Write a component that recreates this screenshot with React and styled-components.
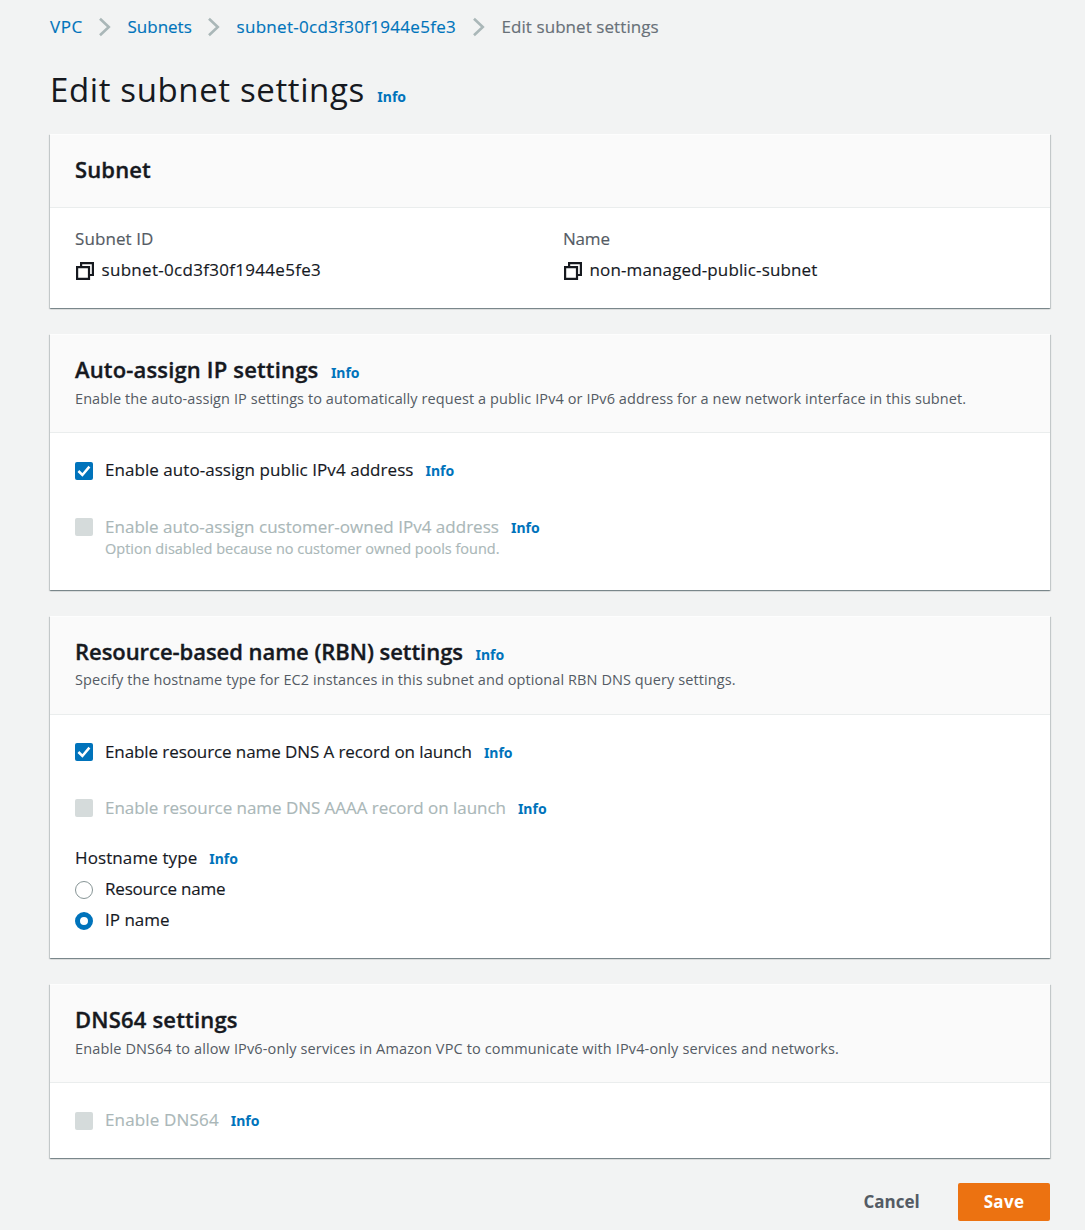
import React, { useState } from 'react';
import styled, { createGlobalStyle } from 'styled-components';

const GlobalStyle = createGlobalStyle`
  *, *::before, *::after { box-sizing: border-box; }
  body {
    margin: 0;
    background: #f2f3f3;
    color: #16191f;
    font-family: "Open Sans", "Noto Sans", sans-serif;
    font-size: 17px;
    line-height: 24px;
  }
`;

const Page = styled.main`
  width: 1085px;
  min-height: 1230px;
  padding: 15px 35px 0 50px;
`;

const Text = styled.span`
  letter-spacing: ${(p) => p.$track || 0}px;
  white-space: nowrap;
  -webkit-text-stroke: 0.15px currentColor;
`;

const Breadcrumbs = styled.nav`
  display: flex;
  align-items: center;
  height: 24px;
`;

const Crumb = styled(Text).attrs({ as: 'a' })`
  color: #0073bb;
  width: ${(p) => p.$width}px;
`;

const CurrentCrumb = styled(Text)`
  color: #687078;
`;

const Chevron = styled.svg`
  flex: none;
  width: 14px;
  height: 20px;
  margin: 0 15.5px 0 15px;
  fill: none;
  stroke: #aab7b8;
  stroke-width: 2.6;
`;

const TitleRow = styled.div`
  display: flex;
  align-items: baseline;
  gap: 12.5px;
  height: 44px;
  margin: 29px 0 22px;
`;

const PageTitle = styled.h1`
  margin: 0;
  font-size: 33px;
  line-height: 44px;
  font-weight: 400;
  letter-spacing: 0.62px;
  white-space: nowrap;
`;

const InfoLink = styled.a`
  color: #0073bb;
  font-family: "Noto Sans", sans-serif;
  font-size: 14px;
  font-weight: 700;
  line-height: 20px;
`;

const Card = styled.section`
  height: ${(p) => p.$height}px;
  margin-bottom: ${(p) => p.$gap}px;
  background: #fff;
  border-top: 1px solid #fdfdfd;
  box-shadow:
    0 1px 1px 0 rgba(0, 28, 36, 0.3),
    1px 1px 1px 0 rgba(0, 28, 36, 0.15),
    -1px 1px 1px 0 rgba(0, 28, 36, 0.15);
`;

const CardHeader = styled.header`
  height: ${(p) => p.$height}px;
  padding: 20px 25px 0;
  background: #fafafa;
  border-bottom: 1px solid #eaeded;
`;

const HeadingRow = styled.div`
  display: flex;
  align-items: baseline;
  gap: 12.5px;
  height: 28px;
`;

const Heading = styled.h2`
  margin: 0;
  font-size: 22px;
  line-height: 28px;
  font-weight: 600;
  letter-spacing: ${(p) => p.$track}px;
  white-space: nowrap;
  -webkit-text-stroke: 0.35px currentColor;
`;

const Description = styled.p`
  margin: ${(p) => p.$top}px 0 0;
  color: #545b64;
  font-size: 14.5px;
  line-height: 22px;
  letter-spacing: ${(p) => p.$track}px;
  white-space: nowrap;
`;

const CardBody = styled.div`
  display: flex;
  flex-direction: column;
  padding: ${(p) => p.$top || 25}px 25px 0;
`;

const Columns = styled.div`
  display: grid;
  grid-template-columns: 488px 1fr;
`;

const Field = styled.div`
  display: flex;
  flex-direction: column;
  gap: 7px;
`;

const FieldLabel = styled(Text)`
  color: #545b64;
`;

const CopyValue = styled.div`
  display: flex;
  align-items: center;
  gap: 6.5px;
`;

const CopyGlyph = styled.svg`
  width: 20px;
  height: 20px;
  margin-top: 1px;
  fill: none;
  stroke: #16191f;
  stroke-width: 2.2;
`;

const Option = styled.div`
  display: flex;
  align-items: flex-start;
  margin-top: ${(p) => p.$gap || 0}px;
  color: ${(p) => (p.$disabled ? '#aab7b8' : '#16191f')};
`;

const Control = styled.button`
  display: grid;
  place-items: center;
  flex: none;
  width: 18px;
  height: 18px;
  margin: ${(p) => p.$drop || 4}px 12px 0 0;
  padding: 0;
  border: 0;
  border-radius: 2px;
  background: ${(p) => (p.disabled ? '#d5dbdb' : p.$on ? '#0073bb' : '#fff')};
  box-shadow: ${(p) => (p.disabled || p.$on ? 'none' : 'inset 0 0 0 1px #879596')};
`;

const Check = styled.svg`
  width: 18px;
  height: 18px;
  fill: none;
  stroke: #fff;
  stroke-width: 2.5;
`;

const RadioControl = styled.button`
  flex: none;
  width: 18px;
  height: 18px;
  margin: 4px 12px 0 0;
  padding: 0;
  border-radius: 50%;
  background: #fff;
  border: ${(p) => (p.$on ? '5.5px solid #0073bb' : '1px solid #879596')};
`;

const OptionText = styled.div`
  display: flex;
  flex-direction: column;
`;

const LabelRow = styled.div`
  display: flex;
  align-items: baseline;
  gap: 12px;
  height: 24px;
  margin-top: ${(p) => p.$gap || 0}px;
`;

const Hint = styled(Text)`
  margin-top: -1px;
  font-size: 14.5px;
  line-height: 22px;
`;

const Actions = styled.footer`
  display: flex;
  justify-content: flex-end;
  gap: 13px;
`;

const Button = styled.button`
  height: 38px;
  padding: 0;
  width: ${(p) => (p.$primary ? 92 : 107)}px;
  border: 0;
  border-radius: 2px;
  background: ${(p) => (p.$primary ? '#ec7211' : 'transparent')};
  color: ${(p) => (p.$primary ? '#fff' : '#545b64')};
  font: 700 17px/38px "Open Sans", sans-serif;
  letter-spacing: ${(p) => p.$track}px;
`;

const Separator = () => (
  <Chevron viewBox="0 0 14 20">
    <path d="M2 1.7 L10.8 10 L2 18.3" />
  </Chevron>
);

const CopyIcon = () => (
  <CopyGlyph viewBox="0 0 20 20">
    <path d="M2.1 6.1H14V17.9H2.1Z" />
    <path d="M6.1 6V2.1H17.9V14H14" />
  </CopyGlyph>
);

const Info = () => <InfoLink>Info</InfoLink>;

function Checkbox({ label, track, hint, hintTrack, initial, disabled, gap, drop }) {
  const [on, setOn] = useState(Boolean(initial));
  return (
    <Option $gap={gap} $disabled={disabled}>
      <Control
        role="checkbox"
        aria-checked={on}
        aria-label={label}
        disabled={disabled}
        $on={on}
        $drop={drop}
        onClick={() => setOn(!on)}
      >
        {on && (
          <Check viewBox="0 0 18 18">
            <path d="M3.4 9 L7.4 13 L14.4 4.6" />
          </Check>
        )}
      </Control>
      <OptionText>
        <LabelRow>
          <Text $track={track}>{label}</Text>
          <Info />
        </LabelRow>
        {hint && <Hint $track={hintTrack}>{hint}</Hint>}
      </OptionText>
    </Option>
  );
}

function Radio({ label, track, on, onSelect }) {
  return (
    <Option $gap={7}>
      <RadioControl role="radio" aria-checked={on} aria-label={label} $on={on} onClick={onSelect} />
      <Text $track={track}>{label}</Text>
    </Option>
  );
}

function SectionHeader({ title, track, height, info, description, descTrack, descTop = 5 }) {
  return (
    <CardHeader $height={height}>
      <HeadingRow>
        <Heading $track={track}>{title}</Heading>
        {info && <Info />}
      </HeadingRow>
      {description && (
        <Description $track={descTrack} $top={descTop}>
          {description}
        </Description>
      )}
    </CardHeader>
  );
}

function CopyField({ label, labelTrack, value, track }) {
  return (
    <Field>
      <FieldLabel $track={labelTrack}>{label}</FieldLabel>
      <CopyValue>
        <CopyIcon />
        <Text $track={track}>{value}</Text>
      </CopyValue>
    </Field>
  );
}

export default function App() {
  const [host, setHost] = useState('ip');
  return (
    <Page>
      <GlobalStyle />
      <Breadcrumbs>
        <Crumb $width={33} $track={0.6}>VPC</Crumb>
        <Separator />
        <Crumb $width={64.5} $track={0}>Subnets</Crumb>
        <Separator />
        <Crumb $width={220.5} $track={0.3}>subnet-0cd3f30f1944e5fe3</Crumb>
        <Separator />
        <CurrentCrumb $track={0.07}>Edit subnet settings</CurrentCrumb>
      </Breadcrumbs>

      <TitleRow>
        <PageTitle>Edit subnet settings</PageTitle>
        <Info />
      </TitleRow>

      <Card $height={174} $gap={26}>
        <SectionHeader title="Subnet" track={0.14} height={73} />
        <CardBody $top={19}>
          <Columns>
            <CopyField label="Subnet ID" labelTrack={0.09} value="subnet-0cd3f30f1944e5fe3" track={0.3} />
            <CopyField label="Name" labelTrack={-0.2} value="non-managed-public-subnet" track={0.13} />
          </Columns>
        </CardBody>
      </Card>

      <Card $height={256} $gap={26}>
        <SectionHeader
          title="Auto-assign IP settings"
          track={0.16}
          height={98}
          info
          description="Enable the auto-assign IP settings to automatically request a public IPv4 or IPv6 address for a new network interface in this subnet."
          descTrack={0.083}
        />
        <CardBody>
          <Checkbox label="Enable auto-assign public IPv4 address" track={0.05} initial />
          <Checkbox
            label="Enable auto-assign customer-owned IPv4 address"
            track={0.02}
            gap={33}
            drop={3}
            disabled
            hint="Option disabled because no customer owned pools found."
            hintTrack={0}
          />
        </CardBody>
      </Card>

      <Card $height={342} $gap={26}>
        <SectionHeader
          title="Resource-based name (RBN) settings"
          track={-0.05}
          height={98}
          info
          description="Specify the hostname type for EC2 instances in this subnet and optional RBN DNS query settings."
          descTrack={0.084}
          descTop={4}
        />
        <CardBody>
          <Checkbox label="Enable resource name DNS A record on launch" track={-0.09} drop={3} initial />
          <Checkbox label="Enable resource name DNS AAAA record on launch" track={-0.045} gap={32} drop={3} disabled />
          <LabelRow $gap={26}>
            <Text $track={0.1}>Hostname type</Text>
            <Info />
          </LabelRow>
          <Radio label="Resource name" track={-0.2} on={host === 'resource'} onSelect={() => setHost('resource')} />
          <Radio label="IP name" track={0} on={host === 'ip'} onSelect={() => setHost('ip')} />
        </CardBody>
      </Card>

      <Card $height={174} $gap={25}>
        <SectionHeader
          title="DNS64 settings"
          track={0.18}
          height={98}
          description="Enable DNS64 to allow IPv6-only services in Amazon VPC to communicate with IPv4-only services and networks."
          descTrack={0.134}
        />
        <CardBody>
          <Checkbox label="Enable DNS64" track={0.16} disabled />
        </CardBody>
      </Card>

      <Actions>
        <Button $track={0}>Cancel</Button>
        <Button $primary $track={0.35}>Save</Button>
      </Actions>
    </Page>
  );
}
